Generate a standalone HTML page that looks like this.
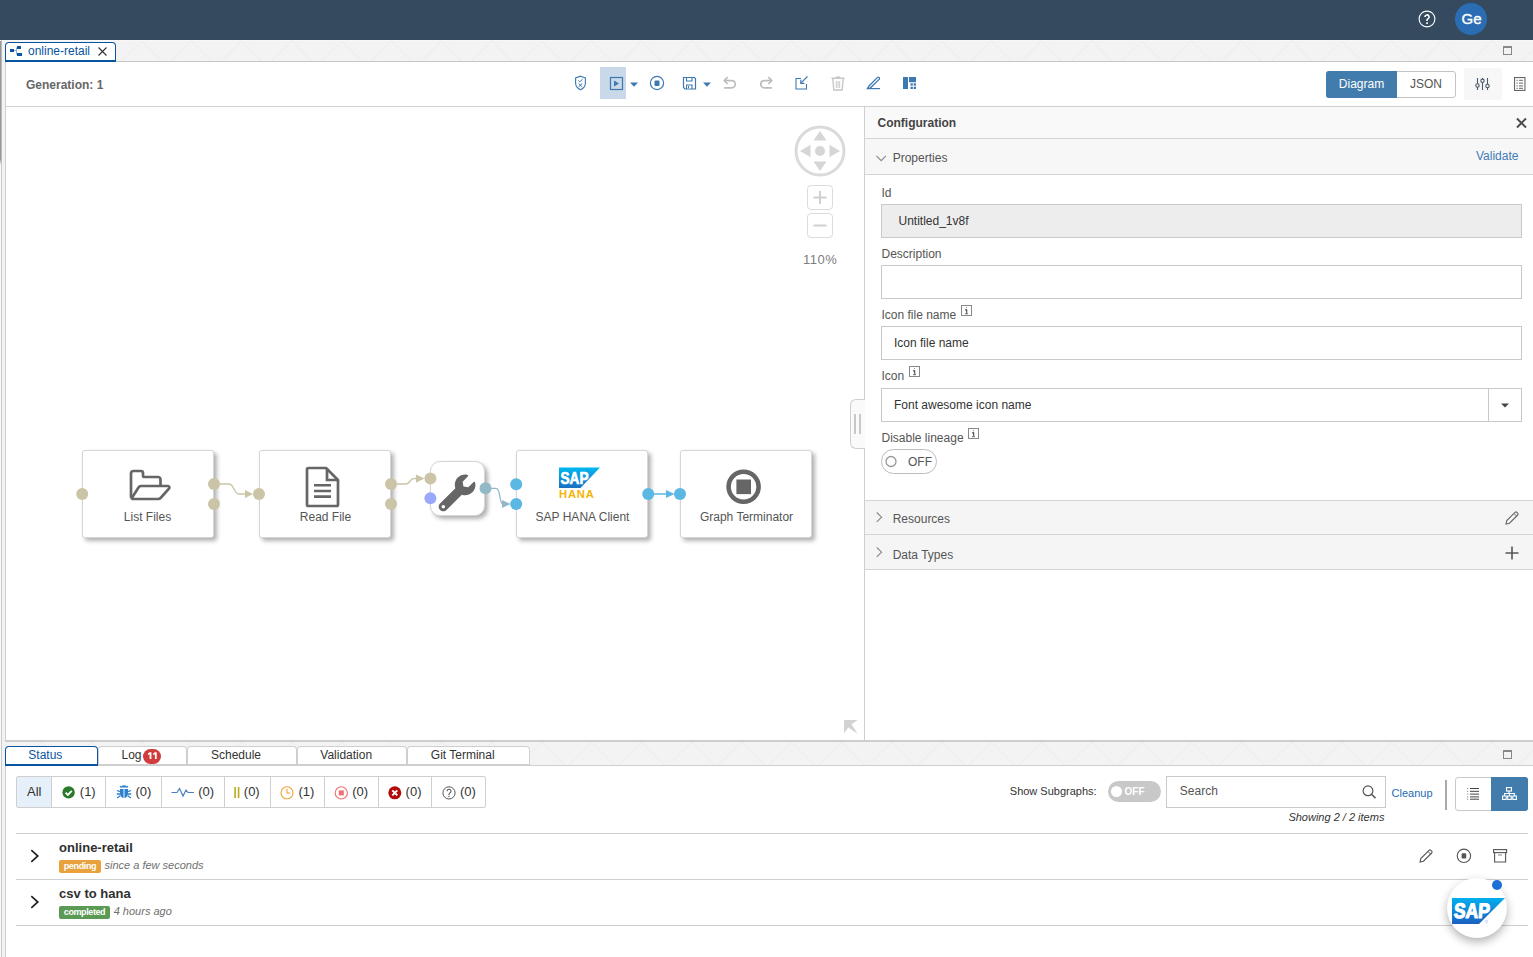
<!DOCTYPE html>
<html><head><meta charset="utf-8">
<style>
*{box-sizing:border-box;margin:0;padding:0}
html,body{width:1533px;height:957px;overflow:hidden;background:#fff;font-family:"Liberation Sans",sans-serif;color:#333}
.a{position:absolute}
.t{position:absolute;white-space:nowrap;line-height:1}
svg{position:absolute;overflow:visible}
#hdr{left:0;top:0;width:1533px;height:40px;background:#354a5f}
#tabstrip{left:0;top:40px;width:1533px;height:22px;background:#f3f3f3;border-bottom:1px solid #c8c8c8}
#lstrip{left:0;top:40px;width:5px;height:917px;background:linear-gradient(to right,#fafafa 0,#fafafa 1px,#c9c9c9 1px,#c9c9c9 2px,#f3f3f3 2px)}
#lstrip2{left:5px;top:61px;width:1px;height:896px;background:#cdcdcd}
#panelL{left:5px;top:61px;width:1px;height:896px;background:#cfcfcf}
.tab1{left:5px;top:42px;width:111px;height:20px;border:1px solid #0854a0;border-bottom:2px solid #0854a0;border-radius:4px 4px 0 0;background:#fff}
#toolbar{left:6px;top:62px;width:1527px;height:45px;background:#fff;border-bottom:1px solid #d0d0d0}
#canvas{left:6px;top:107px;width:858px;height:633px;background:#fff}
#cfg{left:864px;top:107px;width:669px;height:633px;background:#fff;border-left:1px solid #cfcfcf}
</style></head>
<body>
<!-- HEADER -->
<div id="hdr" class="a"></div>
<svg style="left:1418px;top:10px" width="18" height="18" viewBox="0 0 18 18"><circle cx="9" cy="9" r="7.9" fill="none" stroke="#fff" stroke-width="1.1"/><path d="M6.9 7a2.1 2.1 0 1 1 3 1.9c-.6.3-.9.7-.9 1.3v.7" fill="none" stroke="#fff" stroke-width="1.6"/><rect x="8.2" y="12.3" width="1.7" height="1.7" fill="#fff"/></svg>
<div class="a" style="left:1455px;top:3px;width:32px;height:32px;border-radius:50%;background:#2a6db3"></div>
<div class="t" style="left:1455.5px;top:10.6px;width:32px;text-align:center;color:#fff;font-size:15px;-webkit-text-stroke:0.35px #fff">Ge</div>

<!-- TAB STRIP -->
<div id="tabstrip" class="a"></div>
<svg style="left:0;top:40px" width="1533" height="21" viewBox="0 0 1533 21"><defs><pattern id="tri" x="1.6" y="0" width="50" height="21" patternUnits="userSpaceOnUse"><path d="M20 21L40 1L60 21M-30 21L-10 1L10 21" fill="none" stroke="#e9e9e9" stroke-width="0.8"/></pattern></defs><rect x="0" y="0" width="1533" height="21" fill="url(#tri)"/><rect x="0" y="0" width="1533" height="1" fill="#f7f7f7"/></svg>
<div id="lstrip" class="a"></div>
<div id="lstrip2" class="a"></div>
<div class="a" style="left:0;top:41px;width:2px;height:124px;background:linear-gradient(to right,#999 0,#999 1px,#b8b8b8 1px);-webkit-mask-image:linear-gradient(to bottom,#000 0,#000 118px,transparent 124px)"></div>
<div id="panelL" class="a"></div>
<div class="a tab1"></div>
<svg style="left:10px;top:45px" width="14" height="13" viewBox="0 0 14 13"><rect x="0" y="4" width="4" height="3" fill="#0854a0"/><rect x="7" y="1" width="4" height="3" fill="#0854a0"/><rect x="7" y="8" width="5" height="3" fill="#0854a0"/><path d="M4 5.5h2M6.5 2.5v7" stroke="#6aa0d8" stroke-width="0.8" fill="none"/></svg>
<div class="t" style="left:28px;top:44.5px;font-size:12px;color:#0854a0">online-retail</div>
<svg style="left:98px;top:47px" width="9" height="9" viewBox="0 0 9 9"><path d="M0.5 0.5L8.5 8.5M8.5 0.5L0.5 8.5" stroke="#333" stroke-width="1.1"/></svg>
<svg style="left:1503px;top:46px" width="9" height="9" viewBox="0 0 9 9"><rect x="0.5" y="0.5" width="8" height="8" fill="none" stroke="#888" stroke-width="1"/><rect x="0" y="0" width="9" height="2" fill="#888"/></svg>

<!-- TOOLBAR -->
<div id="toolbar" class="a"></div>
<div class="t" style="left:26px;top:78.6px;font-size:12px;font-weight:bold;color:#666">Generation: 1</div>
<!-- toolbar icons -->
<svg style="left:574px;top:75px" width="13" height="16" viewBox="0 0 13 16"><path d="M6.5 1.2L11.4 3v5.2c0 3-2.2 5.2-4.9 6.6C3.8 13.4 1.6 11.2 1.6 8.2V3z" fill="none" stroke="#3d78b0" stroke-width="1.1"/><path d="M4.3 5.4l1.5 1.4 2.8-2.6" fill="none" stroke="#3d78b0" stroke-width="1"/><path d="M4.6 8.6l3.6 3.2M8.2 8.6l-3.6 3.2" fill="none" stroke="#3d78b0" stroke-width="1"/></svg>
<div class="a" style="left:600px;top:67px;width:26px;height:32px;background:#c9d9e9"></div>
<svg style="left:609px;top:76px" width="15" height="15" viewBox="0 0 15 15"><rect x="1.5" y="1.5" width="12" height="12" fill="none" stroke="#3d78b0" stroke-width="1.2"/><path d="M5 4.5L10 7.5L5 10.5z" fill="#3d78b0"/></svg>
<svg style="left:630px;top:82px" width="8" height="5" viewBox="0 0 8 5"><path d="M0 0.5h8L4 4.8z" fill="#3d78b0"/></svg>
<svg style="left:649px;top:75px" width="16" height="16" viewBox="0 0 16 16"><circle cx="8" cy="8" r="6.6" fill="none" stroke="#3d78b0" stroke-width="1.2"/><rect x="5.5" y="5.4" width="5" height="5.6" rx="1" fill="#3d78b0"/></svg>
<svg style="left:682px;top:76px" width="15" height="15" viewBox="0 0 15 15"><path d="M1.5 1.5h11l1 1v10.5h-10.5l-1.5-1.5z" fill="none" stroke="#3d78b0" stroke-width="1.2"/><path d="M4.5 1.5v3.5h5.5v-3.5" fill="none" stroke="#3d78b0" stroke-width="1.1"/><path d="M4.5 13v-4h5.5v4" fill="none" stroke="#3d78b0" stroke-width="1.1"/><rect x="6" y="10" width="1" height="2" fill="#3d78b0"/></svg>
<svg style="left:703px;top:82px" width="8" height="5" viewBox="0 0 8 5"><path d="M0 0.5h8L4 4.8z" fill="#3d78b0"/></svg>
<svg style="left:723px;top:76px" width="14" height="14" viewBox="0 0 14 14"><path d="M4.6 1.2L1.3 4.6L4.6 8" fill="none" stroke="#bdbdbd" stroke-width="1.7"/><path d="M1.5 4.6h7.2a3.6 3.6 0 0 1 0 7.2H1.2" fill="none" stroke="#bdbdbd" stroke-width="1.7"/></svg>
<svg style="left:759px;top:76px" width="14" height="14" viewBox="0 0 14 14"><path d="M9.4 1.2L12.7 4.6L9.4 8" fill="none" stroke="#bdbdbd" stroke-width="1.7"/><path d="M12.5 4.6h-7.2a3.6 3.6 0 0 0 0 7.2h7.5" fill="none" stroke="#bdbdbd" stroke-width="1.7"/></svg>
<svg style="left:795px;top:76px" width="14" height="14" viewBox="0 0 14 14"><path d="M6 2.5H1v10.5h10.5V8" fill="none" stroke="#3d78b0" stroke-width="1.1"/><path d="M12.5 0.5L5.8 7.2" fill="none" stroke="#3d78b0" stroke-width="1.1"/><path d="M5.8 3.8v3.6h3.6" fill="none" stroke="#3d78b0" stroke-width="1.1"/></svg>
<svg style="left:831px;top:76px" width="14" height="15" viewBox="0 0 14 15"><path d="M0.5 2.2h13" stroke="#c4c4c4" stroke-width="1.5"/><path d="M5 1.2h4" stroke="#c4c4c4" stroke-width="1.5"/><path d="M1.8 3l1 11h8.4l1-11" fill="none" stroke="#c4c4c4" stroke-width="1.3"/><path d="M5.3 5v7M7 5v7M8.7 5v7" stroke="#c4c4c4" stroke-width="0.9"/></svg>
<svg style="left:867px;top:76px" width="14" height="14" viewBox="0 0 14 14"><path d="M0.5 12.5L2 10L10.3 1.6a1.2 1.2 0 0 1 1.8 0a1.2 1.2 0 0 1 0 1.8L3.5 11.8z" fill="none" stroke="#3d78b0" stroke-width="1.3"/><path d="M0.6 12.6h12.4" stroke="#3d78b0" stroke-width="1.2"/></svg>
<svg style="left:903px;top:77px" width="14" height="12" viewBox="0 0 14 12"><rect x="0" y="0" width="5" height="12" fill="#3d78b0"/><rect x="6" y="0" width="7" height="5.2" fill="#3d78b0"/><rect x="7.5" y="6.3" width="2.3" height="2.3" fill="#3d78b0"/><rect x="10.7" y="6.3" width="2.3" height="2.3" fill="#3d78b0"/><rect x="7.5" y="9.7" width="2.3" height="2.3" fill="#3d78b0"/><rect x="10.7" y="9.7" width="2.3" height="2.3" fill="#3d78b0"/></svg>
<!-- diagram/json -->
<div class="a" style="left:1326px;top:71px;width:130px;height:27px;border:1px solid #c4c4c4;border-radius:3px;background:#fff"></div>
<div class="a" style="left:1326px;top:71px;width:71px;height:27px;background:#427cac;border-radius:3px 0 0 3px"></div>
<div class="t" style="left:1326px;top:77.8px;width:71px;text-align:center;font-size:12px;color:#fff">Diagram</div>
<div class="t" style="left:1397px;top:77.8px;width:58px;text-align:center;font-size:12px;color:#555">JSON</div>
<div class="a" style="left:1464px;top:68px;width:38px;height:32px;background:#f7f7f7"></div>
<svg style="left:1475px;top:77px" width="16" height="14" viewBox="0 0 16 14"><path d="M2.5 1v12M7.5 1v12M12.5 1v12" stroke="#4a5a6a" stroke-width="1.1"/><circle cx="2.5" cy="8.5" r="1.7" fill="#f7f7f7" stroke="#4a5a6a" stroke-width="1.1"/><circle cx="7.5" cy="3.8" r="1.7" fill="#f7f7f7" stroke="#4a5a6a" stroke-width="1.1"/><circle cx="12.5" cy="9" r="1.7" fill="#f7f7f7" stroke="#4a5a6a" stroke-width="1.1"/></svg>
<svg style="left:1514px;top:77px" width="12" height="14" viewBox="0 0 12 14"><rect x="0.55" y="0.55" width="10.4" height="12.9" fill="none" stroke="#666" stroke-width="1.1"/><path d="M2.5 3.3h1.3M5 3.3h4M2.5 6.1h1.3M5 6.1h4M2.5 8.9h1.3M5 8.9h4M2.5 11.3h1.3M5 11.3h4" stroke="#666" stroke-width="1"/></svg>

<!-- CANVAS -->
<style>
.node{position:absolute;background:#fff;border:1px solid #d6d6d6;border-radius:3px;box-shadow:3px 3px 4px rgba(0,0,0,0.3),0 0 2px rgba(0,0,0,0.06)}
.nlbl{position:absolute;white-space:nowrap;line-height:1;font-size:12px;color:#555;text-align:center}
</style>
<svg style="left:794px;top:125px" width="52" height="52" viewBox="0 0 52 52"><circle cx="26" cy="26" r="24" fill="none" stroke="#dadada" stroke-width="3"/><path d="M26 6L19.5 15.5H32.5z M26 46L19.5 36.5H32.5z M6 26L16.5 19.8V32.2z M46 26L35.5 19.8V32.2z" fill="#d6d6d6"/><circle cx="26" cy="26" r="5" fill="#d6d6d6"/></svg>
<div class="a" style="left:807px;top:185px;width:26px;height:25px;border:1.5px solid #dcdcdc;border-radius:4px"></div>
<svg style="left:807px;top:185px" width="26" height="25" viewBox="0 0 26 25"><path d="M13 6v13M6.5 12.5h13" stroke="#d0d0d0" stroke-width="2"/></svg>
<div class="a" style="left:807px;top:213px;width:26px;height:25px;border:1.5px solid #dcdcdc;border-radius:4px"></div>
<svg style="left:807px;top:213px" width="26" height="25" viewBox="0 0 26 25"><path d="M6.5 12.5h13" stroke="#d0d0d0" stroke-width="2"/></svg>
<div class="t" style="left:803px;top:252.5px;font-size:13px;color:#7d7d7d;letter-spacing:0.5px">110%</div>

<div class="node" style="left:82px;top:450px;width:132px;height:88px"></div>
<div class="node" style="left:259px;top:450px;width:132px;height:88px"></div>
<div class="node" style="left:430px;top:461px;width:55px;height:55px;border-radius:10px"></div>
<div class="node" style="left:516px;top:450px;width:132px;height:88px"></div>
<div class="node" style="left:680px;top:450px;width:132px;height:88px"></div>

<div class="nlbl" style="left:81px;top:511px;width:133px">List Files</div>
<div class="nlbl" style="left:259px;top:511px;width:133px">Read File</div>
<div class="nlbl" style="left:516px;top:511px;width:133px">SAP HANA Client</div>
<div class="nlbl" style="left:680px;top:511px;width:133px">Graph Terminator</div>

<svg style="left:0;top:0" width="1533" height="957" viewBox="0 0 1533 957">
<!-- folder -->
<path d="M131 497.5V473.5a2.5 2.5 0 0 1 2.5-2.5H141a2 2 0 0 1 2 2v2.5a1.5 1.5 0 0 0 1.5 1.5H158a2.5 2.5 0 0 1 2.5 2.5v5.5" fill="none" stroke="#666" stroke-width="2.7" stroke-linejoin="round"/>
<path d="M131.5 498.5L138.5 487.5a3 3 0 0 1 2.5-1.5H168a1.5 1.5 0 0 1 1.2 2.3L161 497.5a3 3 0 0 1-2.5 1.5H133.5a2 2 0 0 1-2-2" fill="none" stroke="#666" stroke-width="2.7" stroke-linejoin="round"/>
<!-- document -->
<path d="M307 469.5a1.5 1.5 0 0 1 1.5-1.5H326l12 12v24.5a1.5 1.5 0 0 1-1.5 1.5H308.5a1.5 1.5 0 0 1-1.5-1.5z" fill="none" stroke="#666" stroke-width="2.7" stroke-linejoin="round"/>
<path d="M327 468.5V480H338" fill="none" stroke="#666" stroke-width="2.7"/>
<path d="M314 485.3h17M314 491h17M314 496.6h17" stroke="#666" stroke-width="2.6"/>
<!-- wrench -->
<g transform="translate(438.7,474.6) scale(0.0717)"><path d="M507.73 109.1c-2.24-9.030-13.54-12.09-20.12-5.51l-74.36 74.36-67.88-11.31-11.31-67.88 74.36-74.36c6.62-6.620 3.43-17.9-5.66-20.16-47.38-11.74-99.55.91-136.58 37.93-39.64 39.64-50.55 97.1-34.05 147.2L18.74 402.76c-24.99 24.99-24.99 65.51 0 90.5 24.99 24.99 65.51 24.99 90.5 0l213.21-213.21c50.12 16.71 107.47 5.68 147.37-34.22 37.07-37.07 49.7-89.32 37.91-136.73zM64 472c-13.25 0-24-10.75-24-24 0-13.26 10.75-24 24-24s24 10.74 24 24c0 13.25-10.75 24-24 24z" fill="#666"/></g>
<!-- terminator -->
<circle cx="743.6" cy="486.7" r="15" fill="none" stroke="#666" stroke-width="4.6"/>
<rect x="736.4" y="479.5" width="14.6" height="14.6" fill="#666"/>
<!-- SAP HANA logo -->
<defs><linearGradient id="sapg" x1="0" y1="0" x2="0" y2="1"><stop offset="0" stop-color="#00b8f1"/><stop offset="1" stop-color="#1a6ec4"/></linearGradient></defs>
<path d="M559 467.5H600L580.5 488H559z" fill="url(#sapg)"/>
<text x="560.5" y="484" font-family="Liberation Sans" font-weight="bold" font-size="16" fill="#fff" stroke="#fff" stroke-width="0.7" stroke-linejoin="round" textLength="28" lengthAdjust="spacingAndGlyphs">SAP</text>
<text x="559" y="497.8" font-family="Liberation Sans" font-weight="bold" font-size="11.2" fill="#f5b400" letter-spacing="0.8">HANA</text>
<!-- connections -->
<path d="M220 484H229C234 484 234 494 239 494H246" fill="none" stroke="#cbc4a6" stroke-width="1.3"/>
<path d="M245 490L253 494L245 498z" fill="#cbc4a6"/>
<path d="M397 484H406C410 484 410 478.5 414 478.5H417" fill="none" stroke="#cbc4a6" stroke-width="1.3"/>
<path d="M416 474.6L424.5 478.6L416 482.8z" fill="#cbc4a6"/>
<path d="M491 488.3H496C501 488.3 499 504 503 504" fill="none" stroke="#93b8c6" stroke-width="1.3"/>
<path d="M502 500L510.5 504L502 508z" fill="#93b8c6"/>
<path d="M654 494H667" fill="none" stroke="#5bb7e3" stroke-width="1.5"/>
<path d="M666 490L674.5 494L666 498z" fill="#5bb7e3"/>
<!-- ports -->
<g fill="#cbc4a6">
<circle cx="82.2" cy="494" r="6"/><circle cx="214" cy="484" r="6"/><circle cx="214" cy="504" r="6"/>
<circle cx="259" cy="494" r="6"/><circle cx="391" cy="484" r="6"/><circle cx="391" cy="504" r="6"/>
<circle cx="430.4" cy="478.5" r="6"/>
</g>
<circle cx="430.4" cy="498.3" r="6" fill="#9aa9fb"/>
<circle cx="485.5" cy="488.3" r="6" fill="#93b8c6"/>
<g fill="#5bb7e3"><circle cx="516.2" cy="484.2" r="6"/><circle cx="516.2" cy="503.9" r="6"/><circle cx="648.2" cy="494" r="6"/><circle cx="680" cy="494" r="6"/></g>
</svg>

<svg style="left:843px;top:719px" width="16" height="16" viewBox="843 719 16 16"><path d="M844 720H857.6L851.5 724.3L857.6 733.7L848.3 727.6L844 733.3z" fill="#d2d2d2"/></svg>
<!-- CONFIG PANEL -->
<div class="a" style="left:864px;top:107px;width:1px;height:634px;background:#cfcfcf"></div>
<div class="a" style="left:865px;top:107px;width:668px;height:32px;background:#f9f9f9;border-bottom:1px solid #d4d4d4"></div>
<div class="t" style="left:877.5px;top:116.5px;font-size:12px;font-weight:bold;color:#444">Configuration</div>
<svg style="left:1516px;top:118px" width="11" height="10" viewBox="0 0 11 10"><path d="M1 0.5L10 9.5M10 0.5L1 9.5" stroke="#4a4a4a" stroke-width="1.9"/></svg>
<div class="a" style="left:865px;top:139px;width:668px;height:36px;background:#f7f7f7;border-bottom:1px solid #d4d4d4"></div>
<svg style="left:876px;top:155px" width="11" height="7" viewBox="0 0 11 7"><path d="M0.5 0.8L5.2 5.6L9.9 0.8" fill="none" stroke="#888" stroke-width="1.1"/></svg>
<div class="t" style="left:892.7px;top:152.3px;font-size:12px;color:#555">Properties</div>
<div class="t" style="left:1476px;top:149.5px;font-size:12px;color:#3f7bb5">Validate</div>

<div class="t" style="left:881.5px;top:186.5px;font-size:12px;color:#555">Id</div>
<div class="a" style="left:881px;top:204px;width:641px;height:34px;background:#ededed;border:1px solid #c9c9c9"></div>
<div class="t" style="left:898.5px;top:214.6px;font-size:12px;color:#333">Untitled_1v8f</div>

<div class="t" style="left:881.5px;top:247.5px;font-size:12px;color:#555">Description</div>
<div class="a" style="left:881px;top:265px;width:641px;height:34px;background:#fff;border:1px solid #c9c9c9"></div>

<div class="t" style="left:881.5px;top:308.5px;font-size:12px;color:#555">Icon file name</div>
<svg style="left:961px;top:305px" width="11" height="11" viewBox="0 0 11 11"><rect x="0.5" y="0.5" width="10" height="10" fill="none" stroke="#888" stroke-width="1"/><path d="M5.5 2.3v0.8M4.3 4.5h1.5v4M4 8.7h3" stroke="#666" stroke-width="1"/></svg>
<div class="a" style="left:881px;top:326px;width:641px;height:34px;background:#fff;border:1px solid #c9c9c9"></div>
<div class="t" style="left:894px;top:336.8px;font-size:12px;color:#333">Icon file name</div>

<div class="t" style="left:881.5px;top:369.5px;font-size:12px;color:#555">Icon</div>
<svg style="left:909px;top:366px" width="11" height="11" viewBox="0 0 11 11"><rect x="0.5" y="0.5" width="10" height="10" fill="none" stroke="#888" stroke-width="1"/><path d="M5.5 2.3v0.8M4.3 4.5h1.5v4M4 8.7h3" stroke="#666" stroke-width="1"/></svg>
<div class="a" style="left:881px;top:388px;width:641px;height:34px;background:#fff;border:1px solid #c9c9c9"></div>
<div class="a" style="left:1488px;top:388px;width:1px;height:34px;background:#c9c9c9"></div>
<svg style="left:1501px;top:403px" width="8" height="5" viewBox="0 0 8 5"><path d="M0 0.5h8L4 4.5z" fill="#444"/></svg>
<div class="t" style="left:894px;top:399px;font-size:12px;color:#333">Font awesome icon name</div>

<div class="t" style="left:881.5px;top:431.6px;font-size:12px;color:#555">Disable lineage</div>
<svg style="left:968px;top:428px" width="11" height="11" viewBox="0 0 11 11"><rect x="0.5" y="0.5" width="10" height="10" fill="none" stroke="#888" stroke-width="1"/><path d="M5.5 2.3v0.8M4.3 4.5h1.5v4M4 8.7h3" stroke="#666" stroke-width="1"/></svg>
<div class="a" style="left:881px;top:449px;width:56px;height:25px;border:1px solid #bdbdbd;border-radius:13px;background:#fff"></div>
<svg style="left:884px;top:455px" width="14" height="14" viewBox="0 0 14 14"><circle cx="7" cy="6.5" r="5" fill="none" stroke="#999" stroke-width="1.3"/></svg>
<div class="t" style="left:908px;top:455.5px;font-size:12px;color:#555">OFF</div>

<div class="a" style="left:865px;top:500px;width:668px;height:35px;background:#f5f5f5;border-top:1px solid #d4d4d4;border-bottom:1px solid #d4d4d4"></div>
<svg style="left:876px;top:512px" width="7" height="11" viewBox="0 0 7 11"><path d="M0.8 0.5L5.6 5.2L0.8 9.9" fill="none" stroke="#888" stroke-width="1.1"/></svg>
<div class="t" style="left:892.7px;top:513.3px;font-size:12px;color:#555">Resources</div>
<svg style="left:1505px;top:511px" width="14" height="14" viewBox="0 0 14 14"><path d="M1 13l0.8-3.5L10 1.3a1.3 1.3 0 0 1 1.8 0l0.9 0.9a1.3 1.3 0 0 1 0 1.8L4.5 12.2z" fill="none" stroke="#666" stroke-width="1.1"/><path d="M9 2.5l2.5 2.5" stroke="#666" stroke-width="1"/></svg>
<div class="a" style="left:865px;top:535px;width:668px;height:35px;background:#f5f5f5;border-bottom:1px solid #d4d4d4"></div>
<svg style="left:876px;top:547px" width="7" height="11" viewBox="0 0 7 11"><path d="M0.8 0.5L5.6 5.2L0.8 9.9" fill="none" stroke="#888" stroke-width="1.1"/></svg>
<div class="t" style="left:892.7px;top:548.5px;font-size:12px;color:#555">Data Types</div>
<svg style="left:1505px;top:546px" width="14" height="14" viewBox="0 0 14 14"><path d="M7 0.5v13M0.5 7h13" stroke="#555" stroke-width="1.6"/></svg>

<!-- splitter handle -->
<div class="a" style="left:850px;top:399px;width:15px;height:50px;background:#fafafa;border:1px solid #cfcfcf;border-right:none;border-radius:6px 0 0 6px"></div>
<div class="a" style="left:854px;top:414px;width:2px;height:20px;background:#c8c8c8"></div>
<div class="a" style="left:859px;top:414px;width:2px;height:20px;background:#c8c8c8"></div>

<!-- BOTTOM -->
<div class="a" style="left:5px;top:740px;width:1528px;height:2px;background:#cdcdcd"></div>
<div class="a" style="left:5px;top:742px;width:1528px;height:24px;background:#f3f3f3"></div>
<svg style="left:5px;top:742px" width="1528" height="23" viewBox="5 0 1528 23"><defs><pattern id="tri2" x="1.6" y="0" width="50" height="23" patternUnits="userSpaceOnUse"><path d="M17 23L40 0L63 23M-33 23L-10 0L13 23" fill="none" stroke="#e9e9e9" stroke-width="0.8"/></pattern></defs><rect x="5" y="0" width="1528" height="23" fill="url(#tri2)"/></svg>
<div class="a" style="left:5px;top:765px;width:1528px;height:1px;background:#cfcfcf"></div>
<style>
.btab{position:absolute;top:746px;height:20px;background:#fff;border:1px solid #cfcfcf;border-bottom:2px solid #cfcfcf;border-radius:4px 4px 0 0}
.seg{position:absolute;top:776px;height:32px;border-left:1px solid #cfcfcf}
.ft{position:absolute;white-space:nowrap;line-height:1;font-size:13px;color:#333;margin-top:-0.4px}
</style>
<div class="btab" style="left:5px;width:93px;border-color:#0854a0"></div>
<div class="t" style="left:28.3px;top:748.5px;font-size:12px;color:#0854a0">Status</div>
<div class="btab" style="left:98px;width:89px"></div>
<div class="t" style="left:121.5px;top:748.5px;font-size:12px;color:#333">Log</div>
<div class="a" style="left:143px;top:749px;width:18px;height:14.5px;border-radius:7.5px;background:#d13c3c"></div>
<svg style="left:143px;top:749px" width="18" height="15" viewBox="0 0 18 15"><path d="M6.6 3.2h1.8V10H6.6V5.2L4.9 6.0V4.6z M11.9 3.2h1.8V10h-1.8V5.2L10.2 6.0V4.6z" fill="#fff"/></svg>
<div class="btab" style="left:187px;width:110px"></div>
<div class="t" style="left:211px;top:748.5px;font-size:12px;color:#333">Schedule</div>
<div class="btab" style="left:297px;width:110px"></div>
<div class="t" style="left:320.3px;top:748.5px;font-size:12px;color:#333">Validation</div>
<div class="btab" style="left:407px;width:123px"></div>
<div class="t" style="left:430.8px;top:748.5px;font-size:12px;color:#333">Git Terminal</div>
<svg style="left:1503px;top:750px" width="9" height="9" viewBox="0 0 9 9"><rect x="0.5" y="0.5" width="8" height="8" fill="none" stroke="#888" stroke-width="1"/><rect x="0" y="0" width="9" height="2" fill="#888"/></svg>

<!-- filter group -->
<div class="a" style="left:16px;top:776px;width:470px;height:32px;border:1px solid #cfcfcf;border-radius:2px;background:#fff"></div>
<div class="a" style="left:17px;top:777px;width:34px;height:30px;background:#e5f0fa"></div>
<div class="seg" style="left:51px"></div><div class="seg" style="left:105px"></div><div class="seg" style="left:161px"></div><div class="seg" style="left:224px"></div><div class="seg" style="left:270px"></div><div class="seg" style="left:324px"></div><div class="seg" style="left:378px"></div><div class="seg" style="left:431px"></div>
<div class="ft" style="left:27px;top:785.2px">All</div>
<svg style="left:62px;top:786px" width="14" height="13" viewBox="0 0 14 13"><circle cx="6.6" cy="6.4" r="6.2" fill="#2b7a2b"/><path d="M3.6 6.6l2.2 2.2 4-4" fill="none" stroke="#fff" stroke-width="1.9"/></svg>
<div class="ft" style="left:79.8px;top:785.2px">(1)</div>
<svg style="left:116px;top:784px" width="16" height="16" viewBox="0 0 16 16"><path d="M5.2 3.5a2.8 2.2 0 0 1 5.6 0z" fill="#2f7fcf"/><path d="M4 5h8v4.5a4 4.5 0 0 1-8 0z" fill="#2f7fcf"/><path d="M8 5v9" stroke="#fff" stroke-width="0.9"/><path d="M1 6.5l3 1.2M15 6.5l-3 1.2M0.8 10h3.2M15.2 10H12M1.2 14l3-2.3M14.8 14l-3-2.3M4 2.3L5.5 3.6M12 2.3L10.5 3.6" stroke="#2f7fcf" stroke-width="1.3"/></svg>
<div class="ft" style="left:135.5px;top:785.2px">(0)</div>
<svg style="left:171px;top:786px" width="24" height="12" viewBox="0 0 24 12"><path d="M0.5 6.5H6L8.5 2.5L12 10L15 4L17 6.5H23" fill="none" stroke="#4a7fc0" stroke-width="1.2"/></svg>
<div class="ft" style="left:198.2px;top:785.2px">(0)</div>
<svg style="left:234px;top:787px" width="7" height="12" viewBox="0 0 7 12"><rect x="0.3" y="0" width="1.6" height="11" fill="#b9ab17"/><rect x="3.8" y="0" width="1.6" height="11" fill="#b9ab17"/></svg>
<div class="ft" style="left:243.8px;top:785.2px">(0)</div>
<svg style="left:280px;top:786px" width="14" height="14" viewBox="0 0 14 14"><circle cx="7" cy="6.8" r="6" fill="none" stroke="#f0a030" stroke-width="1.1"/><path d="M7 3v4h3.3" fill="none" stroke="#f0a030" stroke-width="1.1"/></svg>
<div class="ft" style="left:298.4px;top:785.2px">(1)</div>
<svg style="left:334px;top:786px" width="15" height="14" viewBox="0 0 15 14"><circle cx="7.3" cy="6.9" r="6.1" fill="none" stroke="#f07070" stroke-width="1.1"/><rect x="4.8" y="4.4" width="5" height="5" fill="#f07070"/></svg>
<div class="ft" style="left:352.2px;top:785.2px">(0)</div>
<svg style="left:388px;top:786px" width="14" height="14" viewBox="0 0 14 14"><circle cx="6.8" cy="6.8" r="6.5" fill="#b00a0a"/><path d="M4.3 4.3l5 5M9.3 4.3l-5 5" stroke="#fff" stroke-width="1.9"/></svg>
<div class="ft" style="left:405.6px;top:785.2px">(0)</div>
<svg style="left:442px;top:786px" width="15" height="15" viewBox="0 0 15 15"><circle cx="7" cy="6.9" r="6.1" fill="none" stroke="#555" stroke-width="1"/><path d="M5 5.3a2 2 0 1 1 2.8 1.8c-.5.3-.8.6-.8 1.2v.6" fill="none" stroke="#555" stroke-width="1.1"/><rect x="6.4" y="9.8" width="1.2" height="1.2" fill="#555"/></svg>
<div class="ft" style="left:460px;top:785.2px">(0)</div>

<!-- right filter controls -->
<div class="t" style="left:1009.8px;top:785.5px;font-size:11px;color:#333">Show Subgraphs:</div>
<div class="a" style="left:1108px;top:781px;width:53px;height:21px;border-radius:11px;background:#c8c8c8"></div>
<div class="a" style="left:1110.5px;top:785.7px;width:11.6px;height:11.6px;border-radius:50%;background:#fff"></div>
<div class="t" style="left:1124.6px;top:787.3px;font-size:10px;font-weight:bold;color:#fff">OFF</div>
<div class="a" style="left:1166px;top:776px;width:220px;height:32px;border:1px solid #c9c9c9;background:#fff"></div>
<div class="t" style="left:1179.8px;top:785.3px;font-size:12px;color:#555">Search</div>
<svg style="left:1362px;top:785px" width="15" height="15" viewBox="0 0 15 15"><circle cx="6" cy="5.8" r="4.9" fill="none" stroke="#555" stroke-width="1.2"/><path d="M9.5 9.3l4 3.8" stroke="#555" stroke-width="1.5"/></svg>
<div class="t" style="left:1391.6px;top:787.8px;font-size:11px;color:#1f6bb5">Cleanup</div>
<div class="a" style="left:1445px;top:780px;width:1.5px;height:30px;background:#aaa"></div>
<div class="a" style="left:1454.5px;top:776.5px;width:73px;height:34px;border:1px solid #c9c9c9;border-radius:3px;background:#fff"></div>
<div class="a" style="left:1491px;top:776.5px;width:36.5px;height:34px;background:#427cac;border-radius:0 3px 3px 0"></div>
<svg style="left:1467px;top:787px" width="12" height="13" viewBox="0 0 12 13"><path d="M3 1.5h9M3 4.3h9M3 7.1h9M3 9.9h9M3 12.2h9" stroke="#444" stroke-width="1"/><path d="M0 1.5h1.2M0 4.3h1.2M0 7.1h1.2M0 9.9h1.2M0 12.2h1.2" stroke="#888" stroke-width="1"/></svg>
<svg style="left:1502px;top:787px" width="15" height="13" viewBox="0 0 15 13"><rect x="4.5" y="0.6" width="5" height="3.4" fill="none" stroke="#fff" stroke-width="1.1"/><path d="M7 4v2.5M2.6 9V6.5h9.8V9M7.5 6.5V9" fill="none" stroke="#fff" stroke-width="1.1"/><rect x="0.6" y="9" width="3.6" height="3.4" fill="none" stroke="#fff" stroke-width="1.1"/><rect x="5.7" y="9" width="3.6" height="3.4" fill="none" stroke="#fff" stroke-width="1.1"/><rect x="10.8" y="9" width="3.6" height="3.4" fill="none" stroke="#fff" stroke-width="1.1"/></svg>
<div class="t" style="left:1288.4px;top:811.7px;font-size:11px;font-style:italic;color:#333">Showing 2 / 2 items</div>

<!-- rows -->
<div class="a" style="left:16px;top:833px;width:1512px;height:1px;background:#cfcfcf"></div>
<div class="a" style="left:16px;top:879px;width:1512px;height:1px;background:#cfcfcf"></div>
<div class="a" style="left:16px;top:925px;width:1512px;height:1px;background:#cfcfcf"></div>
<svg style="left:30px;top:849px" width="10" height="14" viewBox="0 0 10 14"><path d="M1.3 1.2L7.8 7L1.3 12.8" fill="none" stroke="#222" stroke-width="1.7"/></svg>
<svg style="left:30px;top:895px" width="10" height="14" viewBox="0 0 10 14"><path d="M1.3 1.2L7.8 7L1.3 12.8" fill="none" stroke="#222" stroke-width="1.7"/></svg>
<div class="t" style="left:59.1px;top:840.9px;font-size:13px;font-weight:bold;color:#2f2f2f">online-retail</div>
<div class="a" style="left:59px;top:860px;width:42px;height:13px;border-radius:2px;background:#e9a23b"></div>
<div class="t" style="left:59px;top:861.5px;width:42px;text-align:center;font-size:9px;font-weight:bold;color:#fff;letter-spacing:-0.35px">pending</div>
<div class="t" style="left:104.5px;top:860.1px;font-size:11px;font-style:italic;color:#707070">since a few seconds</div>
<div class="t" style="left:59.1px;top:886.6px;font-size:13px;font-weight:bold;color:#2f2f2f">csv to hana</div>
<div class="a" style="left:59px;top:906px;width:51px;height:13px;border-radius:2px;background:#5a9a55"></div>
<div class="t" style="left:59px;top:907.5px;width:51px;text-align:center;font-size:9px;font-weight:bold;color:#fff;letter-spacing:-0.4px">completed</div>
<div class="t" style="left:113.7px;top:906.1px;font-size:11px;font-style:italic;color:#707070">4 hours ago</div>

<svg style="left:1419px;top:849px" width="14" height="14" viewBox="0 0 14 14"><path d="M1 13l0.8-3.5L10 1.3a1.3 1.3 0 0 1 1.8 0l0.9 0.9a1.3 1.3 0 0 1 0 1.8L4.5 12.2z" fill="none" stroke="#555" stroke-width="1.1"/><path d="M9 2.5l2.5 2.5" stroke="#555" stroke-width="1"/></svg>
<svg style="left:1456px;top:848px" width="16" height="16" viewBox="0 0 16 16"><circle cx="7.9" cy="7.8" r="6.7" fill="none" stroke="#555" stroke-width="1.1"/><rect x="5.6" y="5.2" width="4.6" height="5.4" rx="0.8" fill="#555"/></svg>
<svg style="left:1493px;top:849px" width="15" height="14" viewBox="0 0 15 14"><rect x="0.6" y="0.6" width="13" height="3" fill="none" stroke="#555" stroke-width="1.1"/><path d="M1.6 3.6v9.4h11v-9.4" fill="none" stroke="#555" stroke-width="1.1"/><path d="M5 6h4" stroke="#888" stroke-width="1"/></svg>

<!-- floating SAP button -->
<div class="a" style="left:1447px;top:878px;width:60px;height:60px;border-radius:50%;background:#fff;box-shadow:0 4px 10px rgba(0,0,0,0.3)"></div>
<svg style="left:1450px;top:895px" width="58" height="30" viewBox="0 0 58 30">
<defs><linearGradient id="sapg2" x1="0" y1="0" x2="0" y2="1"><stop offset="0" stop-color="#00b0ee"/><stop offset="1" stop-color="#1d5fc1"/></linearGradient></defs>
<path d="M2 3H55L29 29H2z" fill="url(#sapg2)"/>
<text x="3.5" y="23" font-family="Liberation Sans" font-weight="bold" font-size="21" fill="#fff" stroke="#fff" stroke-width="1.2" stroke-linejoin="round" textLength="36" lengthAdjust="spacingAndGlyphs" transform="skewX(-4)" style="transform-origin:3px 23px">SAP</text><circle cx="36.5" cy="26.5" r="1.3" fill="none" stroke="#8ab4e8" stroke-width="0.5"/>
</svg>
<div class="a" style="left:1492px;top:880px;width:10px;height:10px;border-radius:50%;background:#1b6fd6"></div>
</body></html>
